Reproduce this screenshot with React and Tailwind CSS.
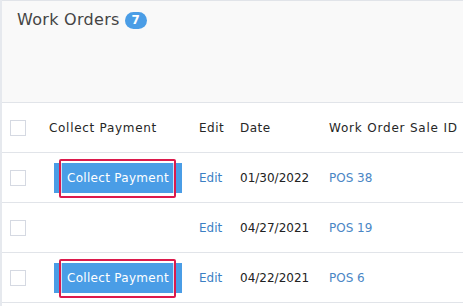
import React from "react";

const font = { fontFamily: '"DejaVu Sans", Verdana, sans-serif' };

function Checkbox() {
  return <div className="w-4 h-4 border border-[#d5d9e2] bg-white" />;
}

function CollectButton() {
  return (
    <div className="relative w-[128px] h-[30px] bg-[#4a9de6] flex items-center justify-center">
      <span className="text-white text-[12px] tracking-[0.3px]">Collect Payment</span>
      <div className="absolute left-[5px] right-[6px] -top-[4px] -bottom-[5px] border-2 border-[#dc1a4c] rounded-[2px] shadow-[inset_0_0_0_1px_rgba(255,255,255,0.7)]" />
    </div>
  );
}

const rows = [
  { pay: true, date: "01/30/2022", id: "POS 38" },
  { pay: false, date: "04/27/2021", id: "POS 19" },
  { pay: true, date: "04/22/2021", id: "POS 6" },
];

export default function App() {
  return (
    <div className="w-[463px] h-[306px] overflow-hidden bg-white border-l-2 border-[#e6e9ee]" style={font}>
      <div className="h-[103px] bg-[#f9f9f9] border-t border-b border-[#e1e4e9] pl-[15px] pt-[7px]">
        <div className="flex items-center gap-[5px]">
          <span className="text-[16px] text-[#444] tracking-[0.3px]">Work Orders</span>
          <span className="h-[17px] min-w-[22px] rounded-full bg-[#4a9de6] text-white text-[12px] font-bold flex items-center justify-center">7</span>
        </div>
      </div>
      <div className="flex flex-col text-[12px]">
        <div className="h-[50px] flex items-center border-b border-[#e1e4e9] text-[#262626]">
          <div className="w-[47px] pl-[8px]"><Checkbox /></div>
          <div className="w-[150px] tracking-[0.7px]">Collect Payment</div>
          <div className="w-[41px] tracking-[0.5px]">Edit</div>
          <div className="w-[89px] tracking-[0.5px]">Date</div>
          <div className="whitespace-nowrap tracking-[0.8px]">Work Order Sale ID</div>
        </div>
        {rows.map((r, i) => (
          <div key={i} className="h-[50px] flex items-center border-b border-[#e1e4e9]">
            <div className="w-[47px] pl-[8px]"><Checkbox /></div>
            <div className="w-[150px] pl-[5px]">{r.pay && <CollectButton />}</div>
            <div className="w-[41px] text-[#3b7fc4]">Edit</div>
            <div className="w-[89px] text-[#222]">{r.date}</div>
            <div className="text-[#4a86c5]">{r.id}</div>
          </div>
        ))}
      </div>
    </div>
  );
}
